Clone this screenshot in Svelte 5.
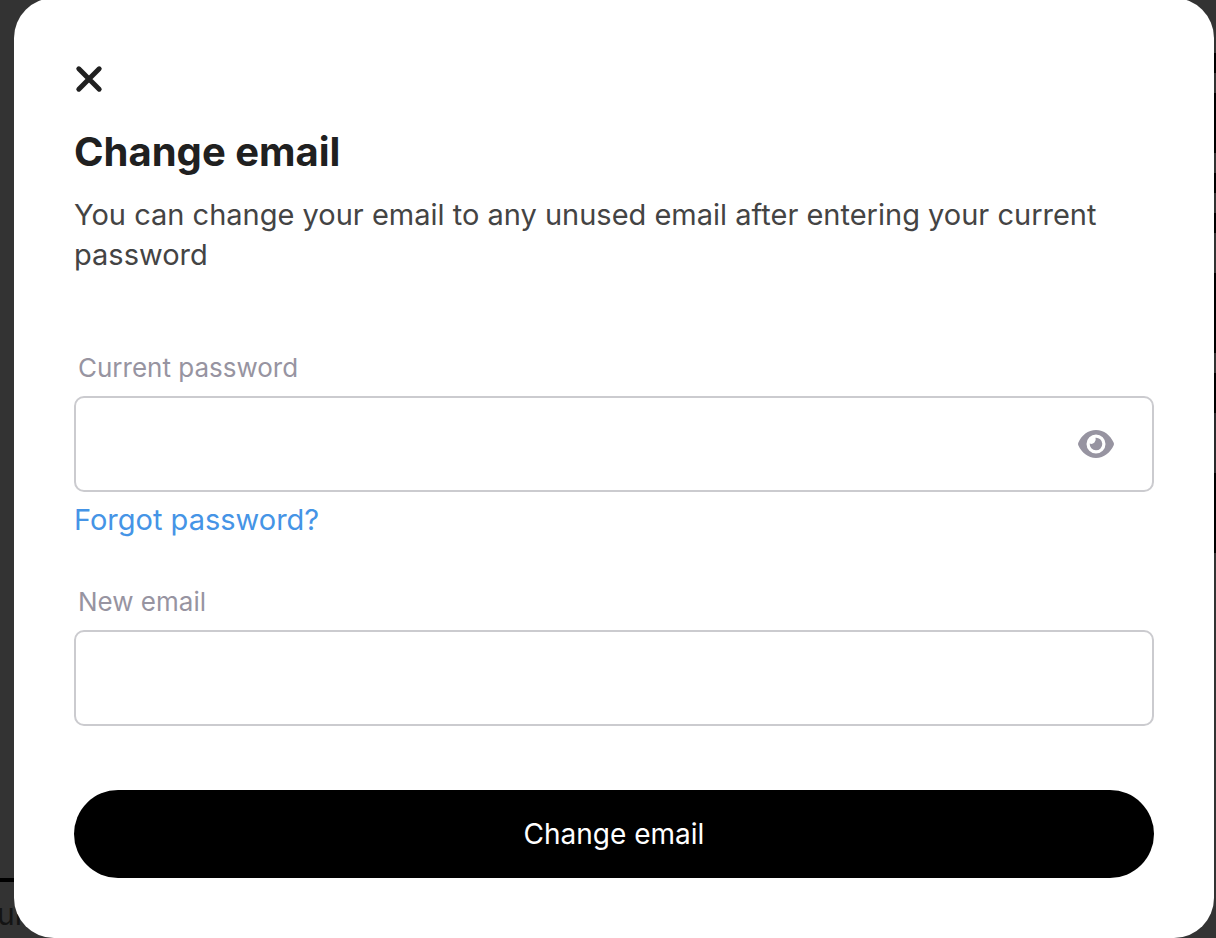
<script>
  let password = $state('');
  let email = $state('');
  let visible = $state(false);
</script>

<div class="backdrop">
  <div class="behind" aria-hidden="true">
    <span class="rule"></span>
    <span class="word">ur</span>
  </div>
  <div class="edge" aria-hidden="true"></div>

  <div class="modal" role="dialog" aria-modal="true" aria-labelledby="title">
    <button class="close" type="button" aria-label="Close">
      <svg viewBox="0 0 30 30" width="30" height="30" aria-hidden="true">
        <path d="M4.800 4.800 25.200 25.200M25.200 4.800 4.800 25.200" fill="none" stroke="#202020" stroke-width="5" stroke-linecap="round" />
      </svg>
    </button>

    <h1 id="title">Change email</h1>
    <p>You can change your email to any unused email after entering your current password</p>

    <form onsubmit={(e) => e.preventDefault()}>
      <label for="password">Current password</label>
      <div class="field">
        <input id="password" type={visible ? 'text' : 'password'} bind:value={password} />
        <button class="eye" type="button" aria-label="Show password" onclick={() => (visible = !visible)}>
          <svg viewBox="0 0 36 28" width="36" height="28" aria-hidden="true">
            <path
              fill="#9794a1"
              fill-rule="evenodd"
              d="M18 0C26 0 32.500 5.500 35.600 12.400Q36.300 14 35.600 15.600C32.500 22.500 26 28 18 28S3.500 22.500.4 15.600Q-.3 14 .4 12.400C3.500 5.500 10 0 18 0ZM18 4.500A9.500 9.500 0 1 0 18 23.500A9.500 9.500 0 1 0 18 4.500Z"
            />
            <path fill="#9794a1" d="M17.500 7.700A6.300 6.300 0 1 1 11.700 13.600A4.600 4.600 0 0 0 17.500 7.700Z" />
          </svg>
        </button>
      </div>
      <a href="#forgot">Forgot password?</a>

      <label for="email">New email</label>
      <div class="field">
        <input id="email" type="email" bind:value={email} />
      </div>

      <button class="submit" type="submit">Change email</button>
    </form>
  </div>
</div>

<style>
  :global(body) {
    margin: 0;
    background: #333;
    overflow: hidden;
  }

  .backdrop {
    display: flow-root;
    position: relative;
    min-height: 100vh;
    padding: 0 2px 0 14px;
    box-sizing: border-box;
    background: #333;
    font-family: Inter, sans-serif;
  }

  .rule {
    position: absolute;
    left: 0;
    top: 878px;
    width: 40px;
    height: 4px;
    background: #000;
  }

  .word {
    position: absolute;
    left: -3px;
    top: 898px;
    font-size: 30px;
    line-height: 32px;
    color: #141414;
  }

  .edge {
    position: absolute;
    top: 0;
    right: 0;
    width: 2px;
    height: 553px;
    background: linear-gradient(
      #333 53px, #000 53px 73px, #333 73px 93px, #000 93px 153px, #333 153px 173px,
      #000 173px 193px, #333 193px 213px, #000 213px 233px, #333 233px 273px,
      #000 273px 353px, #333 353px 373px, #000 373px 413px, #2a2a2c 413px 473px, #000 473px
    );
  }

  .modal {
    position: relative;
    margin-top: -2px;
    padding: 66px 60px 60px;
    border-radius: 40px;
    background: #fff;
  }

  button {
    border: 0;
    padding: 0;
    background: none;
    font: inherit;
    cursor: pointer;
  }

  .close {
    display: block;
  }

  svg {
    display: block;
  }

  h1 {
    margin: 30px 0 0;
    font-size: 40px;
    line-height: 56px;
    font-weight: 700;
    color: #202020;
  }

  p {
    margin: 15px 0 0;
    font-size: 29px;
    line-height: 40px;
    color: #444;
  }

  form {
    display: flex;
    flex-direction: column;
    margin-top: 75px;
  }

  label {
    padding: 0 4px;
    font-size: 26px;
    line-height: 36px;
    color: #9794a1;
  }

  .field {
    display: flex;
    align-items: center;
    height: 96px;
    margin-top: 10px;
    padding: 0 38px 0 24px;
    box-sizing: border-box;
    border: 2px solid #cbcbcf;
    border-radius: 10px;
  }

  input {
    flex: 1;
    min-width: 0;
    height: 100%;
    padding: 0;
    border: 0;
    outline: 0;
    background: none;
    font: inherit;
    font-size: 26px;
  }

  a {
    align-self: flex-start;
    margin: 8px 0 44px;
    font-size: 29px;
    line-height: 40px;
    color: #4594e6;
    text-decoration: none;
  }

  .submit {
    height: 88px;
    margin-top: 64px;
    border-radius: 44px;
    background: #000;
    color: #fff;
    font-size: 28px;
  }
</style>
